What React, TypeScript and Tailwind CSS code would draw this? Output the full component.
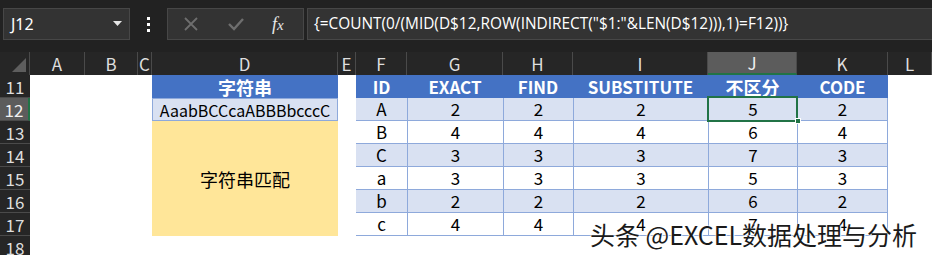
import React from "react";

const cols = ["A", "B", "C", "D", "E", "F", "G", "H", "I", "J", "K", "L"];
const rows = [11, 12, 13, 14, 15, 16, 17, 18];

const data = [
  ["A", "2", "2", "2", "5", "2"],
  ["B", "4", "4", "4", "6", "4"],
  ["C", "3", "3", "3", "7", "3"],
  ["a", "3", "3", "3", "5", "3"],
  ["b", "2", "2", "2", "6", "2"],
  ["c", "4", "4", "4", "7", "4"],
];
const heads = ["ID", "EXACT", "FIND", "SUBSTITUTE", "不区分", "CODE"];

const font = { fontFamily: '"Noto Sans CJK SC", "Noto Sans", sans-serif' };

export default function App() {
  return (
    <div className="relative w-[932px] h-[255px] overflow-hidden bg-white" style={font}>
      {/* toolbar */}
      <div className="h-[52px] bg-[#222222] flex items-start pt-[8px] pl-[3px]">
        <div className="w-[127px] h-[32px] bg-[#333333] border border-[#474747] flex items-center justify-between px-[7px]">
          <span className="text-[16px] leading-[20px] text-white" style={{ fontFamily: '"Noto Sans", sans-serif' }}>J12</span>
          <svg width="9" height="6" viewBox="0 0 9 6"><path d="M0 0H9L4.5 5Z" fill="#e6e6e6" /></svg>
        </div>
        <div className="w-[37px] h-[32px] flex flex-col items-center justify-center gap-[3px]">
          <div className="w-[3px] h-[3px] bg-white" />
          <div className="w-[3px] h-[3px] bg-white" />
          <div className="w-[3px] h-[3px] bg-white" />
        </div>
        <div className="w-[137px] h-[32px] bg-[#333333] border border-[#474747] flex items-center">
          <svg className="ml-[15px]" width="16" height="16" viewBox="0 0 16 16"><path d="M2 2L14 14M14 2L2 14" stroke="#6e6e6e" strokeWidth="1.8" /></svg>
          <svg className="ml-[28px]" width="18" height="16" viewBox="0 0 18 16"><path d="M2 8L7 13L16 3" stroke="#6e6e6e" strokeWidth="2.4" fill="none" /></svg>
          <span className="ml-[27px] text-[18px] leading-[20px] italic text-[#e8e8e8]" style={{ fontFamily: '"Liberation Serif", serif' }}>
            f<span className="text-[15px]">x</span>
          </span>
        </div>
        <div className="ml-[3px] flex-1 h-[32px] bg-[#333333] border border-[#474747] border-r-0 flex items-center pl-[6px]">
          <span className="text-[15.4px] leading-[20px] text-white" style={{ fontFamily: '"Open Sans", "Noto Sans", sans-serif' }}>
            {'{=COUNT(0/(MID(D$12,ROW(INDIRECT("$1:"&LEN(D$12))),1)=F12))}'}
          </span>
        </div>
      </div>

      {/* grid */}
      <div className="grid grid-cols-[30px_55px_53px_14px_186px_18px_51px_96px_70px_135px_89px_91px_44px] grid-rows-[23px_23px_23px_23px_23px_23px_23px_23px_23px] leading-[20px]">
        <div className="bg-[#262626] border-r border-[#4a4a4a] relative">
          <svg className="absolute right-[3px] bottom-[3px]" width="14" height="14" viewBox="0 0 14 14"><path d="M14 0V14H0Z" fill="#5e5e5e" /></svg>
        </div>
        {cols.map((c) => (
          <div
            key={c}
            className={
              "flex items-center justify-center text-[17px] leading-none border-r border-[#4a4a4a] " +
              (c === "J" ? "bg-[#5c5c5c] text-[#f0f0f0] border-b-2 border-b-[#217346]" : "bg-[#262626] text-[#dedede]")
            }
          >
            {c}
          </div>
        ))}

        {rows.map((r, ri) => {
          const cells: React.ReactNode[] = [];
          cells.push(
            <div
              key={"h" + r}
              className={
                "flex items-center justify-center text-[17px] leading-none border-b border-[#4a4a4a] " +
                (r === 12 ? "bg-[#5c5c5c] text-[#f0f0f0] border-r-2 border-r-[#217346]" : "bg-[#262626] text-[#dedede]")
              }
            >
              {r}
            </div>
          );
          cells.push(<div key={"a" + r} />, <div key={"b" + r} />, <div key={"c" + r} />);
          if (r === 11) {
            cells.push(
              <div key="d11" className="bg-[#4472c4] text-white font-bold text-[18px] flex items-center justify-center">
                字符串
              </div>
            );
          } else if (r === 12) {
            cells.push(
              <div key="d12" className="bg-[#d9e1f2] border border-[#8ea9db] text-[16px] text-black flex items-center justify-center">
                AaabBCCcaABBBbcccC
              </div>
            );
          } else if (r === 13) {
            cells.push(
              <div key="d13" className="row-span-5 bg-[#ffe699] text-[18px] text-black flex items-center justify-center">
                字符串匹配
              </div>
            );
          } else if (r === 18) {
            cells.push(<div key="d18" />);
          }
          cells.push(<div key={"e" + r} />);
          if (r === 11) {
            heads.forEach((h, i) =>
              cells.push(
                <div
                  key={"th" + i}
                  className={
                    "bg-[#4472c4] text-white font-bold flex items-center justify-center " +
                    (i === 4 ? "text-[18px]" : "text-[17px]")
                  }
                >
                  {h}
                </div>
              )
            );
          } else if (r <= 17) {
            const row = data[ri - 1];
            const bg = r % 2 === 0 ? "bg-[#d9e1f2]" : "bg-white";
            row.forEach((v, i) =>
              cells.push(
                <div
                  key={"td" + r + i}
                  className={
                    bg +
                    " text-[17px] text-black flex items-center justify-center border-b border-[#8ea9db] " +
                    (i > 0 ? "border-l " : "") +
                    (i === 5 ? "border-r " : "") +
                    (r === 12 && i === 4 ? "relative" : "")
                  }
                >
                  {v}
                  {r === 12 && i === 4 && (
                    <>
                      <div className="absolute left-[-2px] top-[-2px] right-[-1px] bottom-[-2px] border-2 border-[#217346]" />
                      <div className="absolute right-[-4px] bottom-[-4px] w-[6px] h-[6px] bg-[#217346] border border-white" />
                    </>
                  )}
                </div>
              )
            );
          } else {
            for (let i = 0; i < 6; i++) cells.push(<div key={"x" + i} />);
          }
          cells.push(<div key={"l" + r} />);
          return <React.Fragment key={r}>{cells}</React.Fragment>;
        })}
      </div>

      {/* watermark */}
      <div
        className="absolute left-[590px] top-[219px] text-[25px] leading-[30px] text-[#1a1a1a] whitespace-nowrap"
        style={{ textShadow: "0 0 2px #fff, 0 0 2px #fff, 1px 1px 1px #fff" }}
      >
        头条 @EXCEL数据处理与分析
      </div>
    </div>
  );
}
